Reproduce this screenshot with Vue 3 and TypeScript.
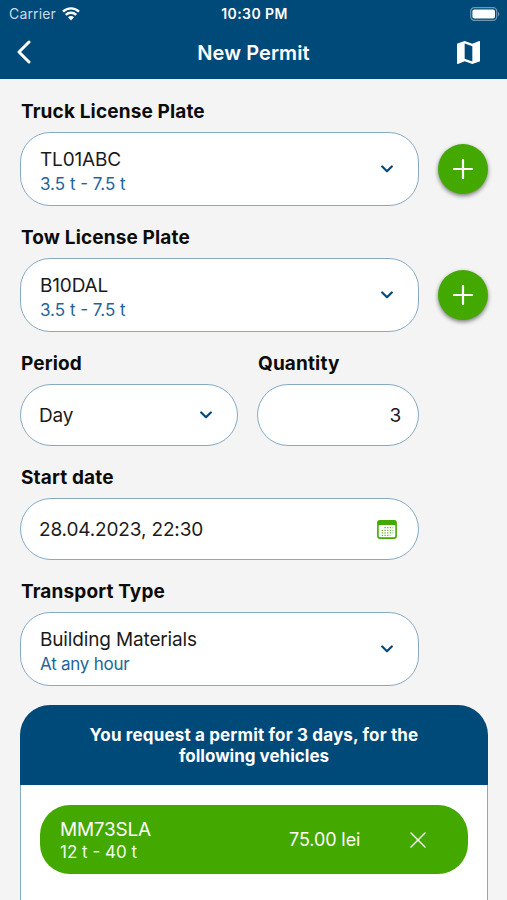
<script setup lang="ts">
import { ref, computed } from 'vue'

interface Vehicle {
  label: string
  plate: string
  weight: string
}

interface PermitItem {
  plate: string
  weight: string
  price: string
}

const vehicles: Vehicle[] = [
  { label: 'Truck License Plate', plate: 'TL01ABC', weight: '3.5 t - 7.5 t' },
  { label: 'Tow License Plate', plate: 'B10DAL', weight: '3.5 t - 7.5 t' },
]

const period = ref('Day')
const quantity = ref(3)
const startDate = ref('28.04.2023, 22:30')
const items = ref<PermitItem[]>([{ plate: 'MM73SLA', weight: '12 t - 40 t', price: '75.00 lei' }])
const summary = computed(() => `You request a permit for ${quantity.value} days, for the`)

function removeItem(index: number): void {
  items.value.splice(index, 1)
}
</script>

<template>
  <div class="screen">
    <header class="top">
      <div class="status">
        <div class="carrier">
          <span>Carrier</span>
          <svg class="wifi" viewBox="0 0 18 14" fill="none" stroke="#fff" stroke-width="2.4">
            <path d="M1 4.7C5.5.3 12.5.3 17 4.7" />
            <path d="M3.8 7.9C6.7 5.1 11.3 5.1 14.2 7.9" />
            <path d="M6 10.3C7.7 8.7 10.3 8.7 12 10.3L9 13.4Z" fill="#fff" stroke="none" />
          </svg>
        </div>
        <span class="clock">10:30 PM</span>
        <svg class="battery" viewBox="0 0 30 14">
          <rect x=".7" y=".7" width="26" height="12.6" rx="3.6" fill="none" stroke="#6f97b3" stroke-width="1.2" />
          <rect x="2.4" y="2.4" width="22.6" height="9.2" rx="2" fill="#fff" />
          <path d="M28 4.8c1.8.8 1.8 3.6 0 4.4z" fill="#6f97b3" />
        </svg>
      </div>
      <div class="nav">
        <button class="icon-btn" type="button">
          <svg class="back" viewBox="0 0 14 24" fill="none" stroke="#fff" stroke-width="3" stroke-linecap="round" stroke-linejoin="round">
            <path d="M12 2 2 12l10 10" />
          </svg>
        </button>
        <h1>New Permit</h1>
        <button class="icon-btn" type="button">
          <svg class="map" viewBox="3 3 18 18" fill="#fff">
            <path d="M20.5 3l-.16.03L15 5.1 9 3 3.36 4.9c-.21.07-.36.25-.36.48V20.5c0 .28.22.5.5.5l.16-.03L9 18.9l6 2.1 5.64-1.9c.21-.07.36-.25.36-.48V3.5c0-.28-.22-.5-.5-.5zM15 19l-6-2.11V5l6 2.11V19z" />
          </svg>
        </button>
      </div>
    </header>

    <main class="form">
      <section v-for="v in vehicles" :key="v.label" class="field">
        <h2>{{ v.label }}</h2>
        <div class="with-add">
          <div class="box tall">
            <div class="lines">
              <span class="value">{{ v.plate }}</span>
              <span class="sub">{{ v.weight }}</span>
            </div>
            <svg class="chevron" viewBox="0 0 12 8"><path d="M1.2 1.5 6 6.2l4.8-4.7" /></svg>
          </div>
          <button class="add" type="button">
            <svg viewBox="0 0 20 20"><path d="M10 1v18M1 10h18" /></svg>
          </button>
        </div>
      </section>

      <div class="pair">
        <section class="field">
          <h2>Period</h2>
          <div class="box single">
            <span class="value">{{ period }}</span>
            <svg class="chevron" viewBox="0 0 12 8"><path d="M1.2 1.5 6 6.2l4.8-4.7" /></svg>
          </div>
        </section>
        <section class="field">
          <h2>Quantity</h2>
          <div class="box single number">
            <span class="value">{{ quantity }}</span>
          </div>
        </section>
      </div>

      <section class="field">
        <h2>Start date</h2>
        <div class="box single">
          <span class="value">{{ startDate }}</span>
          <svg class="calendar" viewBox="0 0 20 19">
            <rect x=".9" y=".9" width="18.2" height="17.2" rx="2" fill="#fff" stroke="#43a800" stroke-width="1.6" />
            <path d="M.9 5V2.4Q.9.8 2.5.8h15q1.6 0 1.6 1.6V5z" fill="#43a800" />
            <path d="M7.4 7.7h8.8M4.7 10.3h11.5M4.7 12.9h11.5M4.7 15.3h8.8" stroke="#6fb548" stroke-width="1.3" stroke-dasharray="1.4 1.3" />
          </svg>
        </div>
      </section>

      <section class="field">
        <h2>Transport Type</h2>
        <div class="box tall">
          <div class="lines">
            <span class="value">Building Materials</span>
            <span class="sub hours">At any hour</span>
          </div>
          <svg class="chevron" viewBox="0 0 12 8"><path d="M1.2 1.5 6 6.2l4.8-4.7" /></svg>
        </div>
      </section>

      <section class="card">
        <div class="card-head"><span class="summary">{{ summary }}</span><br />following vehicles</div>
        <div class="card-body">
          <div v-for="(item, i) in items" :key="item.plate" class="pill">
            <div class="lines">
              <span class="value">{{ item.plate }}</span>
              <span class="sub">{{ item.weight }}</span>
            </div>
            <span class="price">{{ item.price }}</span>
            <button class="remove" type="button" @click="removeItem(i)">
              <svg viewBox="0 0 16 16"><path d="M1 1l14 14M15 1 1 15" /></svg>
            </button>
          </div>
        </div>
      </section>
    </main>
  </div>
</template>

<style>
body {
  background: #f4f4f4;
  overflow: hidden;
}
</style>

<style scoped>
.screen {
  width: 507px;
  height: 900px;
  overflow: hidden;
  display: flex;
  flex-direction: column;
  background: #f4f4f4;
  color: #1b1b1b;
  font-family: Inter, 'Liberation Sans', sans-serif;
}
.screen * {
  box-sizing: border-box;
}
button {
  border: 0;
  padding: 0;
  background: none;
  display: flex;
  align-items: center;
  justify-content: center;
}
svg {
  display: block;
  flex: none;
}
.top {
  height: 79px;
  flex: none;
  background: #004a7a;
  color: #fff;
}
.status {
  height: 27px;
  padding: 0 7px 0 9px;
  display: grid;
  grid-template-columns: 1fr auto 1fr;
  align-items: center;
  font-size: 14px;
}
.carrier {
  display: flex;
  align-items: center;
  gap: 6px;
  color: #c9dae6;
  letter-spacing: 0.15px;
}
.wifi {
  width: 18px;
  height: 14px;
}
.clock {
  font-weight: 600;
  letter-spacing: 0.4px;
}
.battery {
  width: 30px;
  height: 14px;
  justify-self: end;
}
.nav {
  height: 50px;
  padding: 0 27px 0 17px;
  display: grid;
  grid-template-columns: 1fr auto 1fr;
  align-items: center;
}
.icon-btn {
  justify-self: start;
}
.icon-btn:last-child {
  justify-self: end;
}
.back {
  width: 14px;
  height: 24px;
}
.map {
  width: 23px;
  height: 23px;
}
h1 {
  margin: 1px -5px 0 5px;
  font-size: 20px;
  font-weight: 600;
  letter-spacing: 0.08px;
}
.form {
  padding: 1px 20px 0;
  display: flex;
  flex-direction: column;
}
.field h2 {
  margin: 0;
  height: 52px;
  padding: 20px 0 0 1px;
  font-size: 19px;
  line-height: 24px;
  letter-spacing: 0.14px;
  font-weight: 700;
  color: #0c0c0c;
  white-space: nowrap;
}
.with-add {
  display: flex;
  align-items: center;
  justify-content: space-between;
}
.box {
  width: 399px;
  display: flex;
  align-items: center;
  justify-content: space-between;
  background: #fff;
  border: 1px solid #86aac4;
  border-radius: 30px;
}
.tall {
  height: 74px;
  padding: 0 25px 0 19px;
}
.tall .lines {
  padding-top: 5px;
}
.single {
  height: 62px;
  padding: 0 25px 0 18px;
  border-radius: 31px;
}
.lines {
  display: flex;
  flex-direction: column;
}
.value {
  font-size: 19px;
  line-height: 25px;
  letter-spacing: -0.15px;
}
.sub {
  font-size: 17px;
  line-height: 24px;
  color: #1f659b;
}
.hours {
  letter-spacing: -0.25px;
}
.chevron {
  width: 12px;
  height: 8px;
  fill: none;
  stroke: #004a7a;
  stroke-width: 2.2;
  stroke-linecap: round;
  stroke-linejoin: round;
}
.add {
  width: 50px;
  height: 50px;
  margin-right: -1px;
  border-radius: 50%;
  background: #43a800;
  box-shadow: 0 2px 4px rgba(0, 0, 0, 0.5);
}
.add svg {
  width: 20px;
  height: 20px;
  fill: none;
  stroke: #fff;
  stroke-width: 2.2;
  stroke-linecap: round;
}
.pair {
  display: flex;
  gap: 19px;
}
.pair .box {
  width: 218px;
}
.pair .number {
  width: 162px;
  justify-content: flex-end;
  padding-right: 17px;
}
.calendar {
  width: 20px;
  height: 19px;
  margin-right: -4px;
}
.card {
  margin-top: 19px;
  height: 240px;
  width: 468px;
  display: flex;
  flex-direction: column;
}
.card-head {
  height: 80px;
  padding-top: 20px;
  border-radius: 30px 30px 0 0;
  background: #004a7a;
  color: #fff;
  text-align: center;
  font-size: 17px;
  line-height: 21px;
  font-weight: 700;
}
.summary {
  letter-spacing: 0.16px;
}
.card-body {
  flex: 1;
  padding: 20px 19px;
  background: #fff;
  border: solid #86aac4;
  border-width: 0 1px;
}
.pill {
  height: 69px;
  border-radius: 30px;
  background: #43a800;
  color: #fff;
  padding: 0 42px 0 20px;
  display: grid;
  grid-template-columns: 229px 1fr 16px;
  align-items: center;
}
.pill .value {
  line-height: 24px;
  letter-spacing: -0.25px;
}
.pill .sub {
  color: #f0ffe8;
  font-size: 17px;
  line-height: 20px;
}
.price {
  font-size: 18px;
  letter-spacing: -0.1px;
}
.remove svg {
  width: 16px;
  height: 16px;
  fill: none;
  stroke: #fff;
  stroke-width: 1.4;
  stroke-linecap: round;
}
</style>
